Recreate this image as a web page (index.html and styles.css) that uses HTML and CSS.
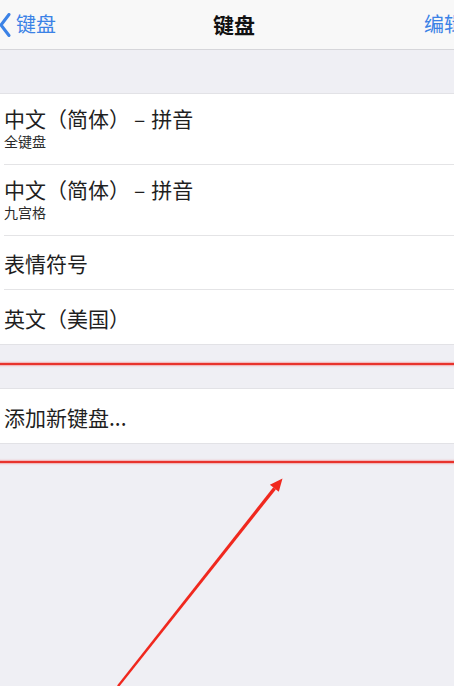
FILE: index.html
```html
<!DOCTYPE html>
<html lang="zh-CN">
<head>
<meta charset="utf-8">
<title>键盘</title>
<link rel="stylesheet" href="styles.css">
</head>
<body>
<div class="page">
  <header class="nav">
    <div class="nav-back">
      <svg class="chev" width="12" height="24" viewBox="0 0 12 24"><path d="M10 1.5 L2 12 L10 22.5" fill="none" stroke="#3b82e6" stroke-width="3" stroke-linecap="round" stroke-linejoin="round"/></svg>
      <span class="back-label">键盘</span>
    </div>
    <div class="nav-title">键盘</div>
    <div class="nav-edit">编辑</div>
  </header>

  <div class="spacer-top"></div>

  <ul class="list">
    <li class="row two">
      <div class="row-title">中文（简体）<span class="dash">–</span>拼音</div>
      <div class="row-sub">全键盘</div>
    </li>
    <li class="row two">
      <div class="row-title">中文（简体）<span class="dash">–</span>拼音</div>
      <div class="row-sub">九宫格</div>
    </li>
    <li class="row one">
      <div class="row-title">表情符号</div>
    </li>
    <li class="row one last">
      <div class="row-title">英文（美国）</div>
    </li>
  </ul>

  <div class="gap gap-a"></div>
  <div class="mark"></div>
  <div class="gap gap-b"></div>

  <div class="list add">
    <div class="row one last">
      <div class="row-title">添加新键盘...</div>
    </div>
  </div>

  <div class="gap gap-c"></div>
  <div class="mark"></div>

  <svg class="arrow" width="454" height="686" viewBox="0 0 454 686">
    <polygon points="118.9,687 117.1,685.6 273.3,487.2 275.9,489.4" fill="#f0281e"/>
    <polygon points="282.5,478.5 278.8,491.8 269.9,484.8" fill="#f0281e"/>
  </svg>
</div>
</body>
</html>
```

FILE: styles.css
```css
html, body {
  margin: 0;
  padding: 0;
}
body {
  background: #efeff4;
  font-family: "Noto Sans CJK SC", "Noto Sans", sans-serif;
  color: #1f1f1f;
  overflow: hidden;
}
.page {
  position: relative;
  width: 454px;
  height: 686px;
  overflow: hidden;
}
.nav {
  height: 49px;
  border-bottom: 1px solid #d6d6da;
  background: #f8f8f8;
  display: flex;
  align-items: center;
  white-space: nowrap;
}
.nav > * {
  flex-shrink: 0;
}
.nav-back {
  width: 213px;
  display: flex;
  align-items: center;
  color: #3b82e6;
  font-size: 20px;
  line-height: 26px;
}
.chev {
  display: block;
  margin-right: 5px;
  margin-left: -1px;
}
.back-label {
  margin-top: -2px;
}
.nav-title {
  font-size: 21px;
  font-weight: 700;
  line-height: 26px;
  color: #111;
  margin-top: -2px;
}
.nav-edit {
  margin-left: 169px;
  font-size: 20px;
  line-height: 26px;
  color: #3b82e6;
  margin-top: -2px;
}
.spacer-top {
  height: 43px;
}
.list {
  list-style: none;
  margin: 0;
  padding: 0;
  background: #fff;
  border-top: 1px solid #e2e2e6;
  border-bottom: 1px solid #e2e2e6;
}
.row {
  margin-left: 4px;
  border-bottom: 1px solid #e4e4e6;
  display: flex;
  flex-direction: column;
  justify-content: center;
}
.row.last {
  border-bottom: none;
}
.row.two {
  height: 71px;
  justify-content: flex-start;
  padding-top: 12px;
  box-sizing: border-box;
}
.row.one {
  height: 53px;
}
.row.one.last {
  height: 54px;
}
.row-title {
  font-size: 21px;
  line-height: 24px;
  white-space: nowrap;
}
.dash {
  margin: 0 6px 0 4px;
}
.row.one .row-title {
  margin-top: 1px;
}
.row-sub {
  font-size: 14px;
  line-height: 18px;
  color: #2a2a2a;
  margin-top: 2px;
}
.gap-a {
  height: 18px;
}
.gap-b {
  height: 23px;
}
.gap-c {
  height: 17px;
}
.mark {
  height: 2px;
  background: #e8332c;
  box-shadow: 0 0 1.5px 1px rgba(240, 90, 90, 0.45);
}
.arrow {
  position: absolute;
  left: 0;
  top: 0;
  pointer-events: none;
}
```
